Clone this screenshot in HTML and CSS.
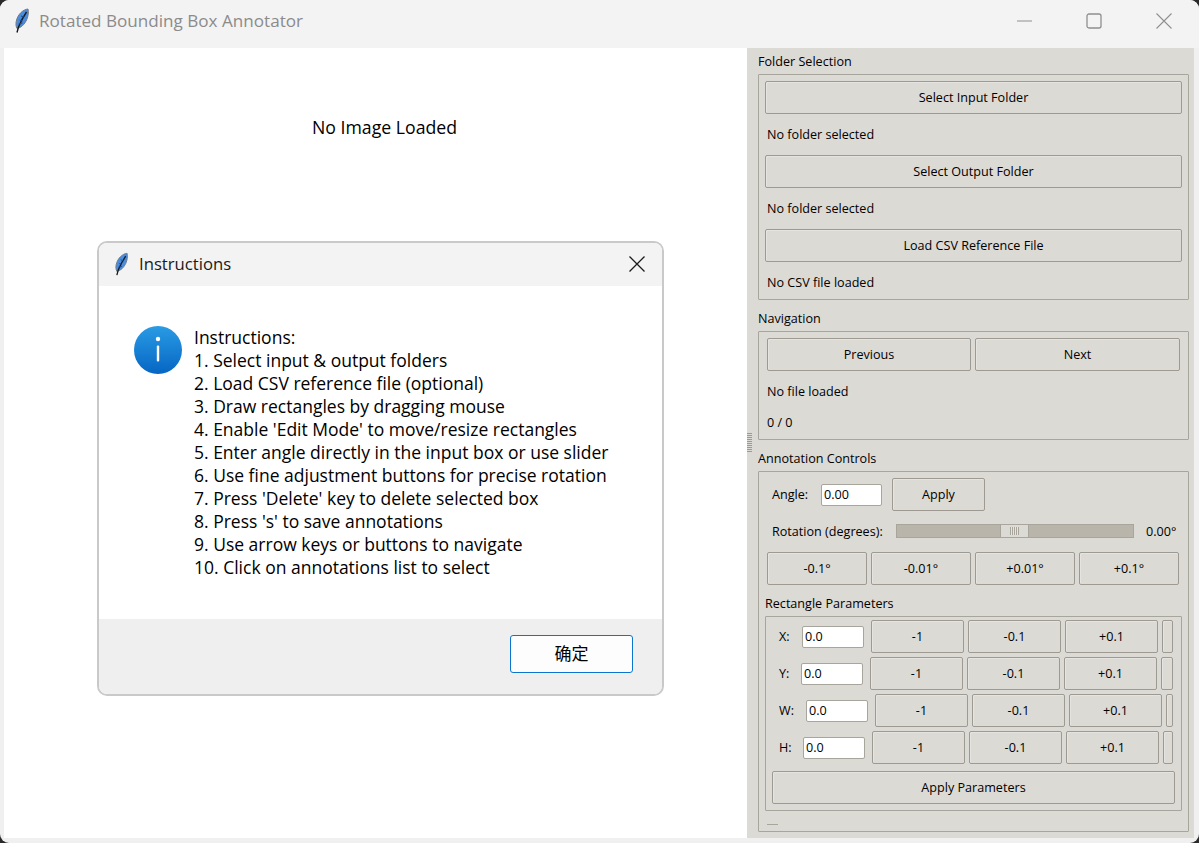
FILE: index.html
```html
<!DOCTYPE html>
<html lang="en">
<head>
  <meta charset="UTF-8">
  <meta name="viewport" content="width=device-width, initial-scale=1.0">
  <title>Rotated Bounding Box Annotator</title>
  <link rel="stylesheet" href="styles.css">
</head>
<body>
  <div class="window">
    <header class="titlebar">
      <svg class="feather" viewBox="0 0 14 25" width="14" height="25">
        <path d="M13 1C8 1.500 2.500 6.500 1.200 13.500c-.5 2.800-.2 5 .8 7 4-.8 7.500-4 9.700-8.800C13.200 8.500 13.800 4 13 1z" fill="#4a8ddd" stroke="#6f7a86" stroke-width="1"/>
        <path d="M11.500 4C8.500 8.500 5.500 14 3.500 19L2 24.500" fill="none" stroke="#141a22" stroke-width="1.400"/>
        <path d="M4.500 12l3 1M6 8l3 1M3.500 16l4-1" stroke="#1d4c8c" stroke-width="1"/>
      </svg>
      <span class="app-title">Rotated Bounding Box Annotator</span>
      <div class="window-buttons">
        <svg viewBox="0 0 16 16" width="16" height="16"><path d="M1 8h15" stroke="#8f8f8f" stroke-width="1"/></svg>
        <svg viewBox="0 0 16 16" width="16" height="16"><rect x="1" y="1" width="14" height="14" rx="2" fill="none" stroke="#8f8f8f" stroke-width="1.300"/></svg>
        <svg viewBox="0 0 16 16" width="16" height="16"><path d="M.5.5l15 15M15.500.5l-15 15" stroke="#8f8f8f" stroke-width="1.100"/></svg>
      </div>
    </header>

    <div class="content">
      <main class="canvas">
        <p class="no-image">No Image Loaded</p>
      </main>

      <aside class="panel">
        <div class="grip"></div>

        <h4>Folder Selection</h4>
        <section class="frame folders">
          <button>Select Input Folder</button>
          <p>No folder selected</p>
          <button>Select Output Folder</button>
          <p>No folder selected</p>
          <button>Load CSV Reference File</button>
          <p>No CSV file loaded</p>
        </section>

        <h4>Navigation</h4>
        <section class="frame navigation">
          <div class="nav-buttons">
            <button>Previous</button>
            <button>Next</button>
          </div>
          <p>No file loaded</p>
          <p>0 / 0</p>
        </section>

        <h4>Annotation Controls</h4>
        <section class="frame annotation">
          <div class="angle-row">
            <label>Angle:</label>
            <input type="text" value="0.00">
            <button>Apply</button>
          </div>
          <div class="rotation-row">
            <label>Rotation (degrees):</label>
            <div class="trough"><div class="thumb"><div class="thumb-lines"></div></div></div>
            <span>0.00°</span>
          </div>
          <div class="fine-row">
            <button>-0.1°</button>
            <button>-0.01°</button>
            <button>+0.01°</button>
            <button>+0.1°</button>
          </div>

          <h4 class="sub-title">Rectangle Parameters</h4>
          <div class="frame params">
            <div class="param-row row-x">
              <label>X:</label>
              <input type="text" value="0.0">
              <button>-1</button><button>-0.1</button><button>+0.1</button><button class="cut"></button>
            </div>
            <div class="param-row row-y">
              <label>Y:</label>
              <input type="text" value="0.0">
              <button>-1</button><button>-0.1</button><button>+0.1</button><button class="cut"></button>
            </div>
            <div class="param-row row-w">
              <label>W:</label>
              <input type="text" value="0.0">
              <button>-1</button><button>-0.1</button><button>+0.1</button><button class="cut"></button>
            </div>
            <div class="param-row row-h">
              <label>H:</label>
              <input type="text" value="0.0">
              <button>-1</button><button>-0.1</button><button>+0.1</button><button class="cut"></button>
            </div>
            <button class="apply-params">Apply Parameters</button>
          </div>
          <div class="dash"></div>
        </section>
      </aside>
    </div>

    <!-- message box on top of the main window -->
    <div class="dialog">
      <div class="dialog-title">
        <svg class="feather" viewBox="0 0 14 25" width="13" height="24">
          <path d="M13 1C8 1.500 2.500 6.500 1.200 13.500c-.5 2.800-.2 5 .8 7 4-.8 7.500-4 9.700-8.800C13.200 8.500 13.800 4 13 1z" fill="#4a8ddd" stroke="#6f7a86" stroke-width="1"/>
          <path d="M11.500 4C8.500 8.500 5.500 14 3.500 19L2 24.500" fill="none" stroke="#141a22" stroke-width="1.400"/>
          <path d="M4.500 12l3 1M6 8l3 1M3.500 16l4-1" stroke="#1d4c8c" stroke-width="1"/>
        </svg>
        <span>Instructions</span>
        <svg class="dialog-close" viewBox="0 0 16 16" width="16" height="16"><path d="M.5.5l15 15M15.500.5l-15 15" stroke="#1a1a1a" stroke-width="1.300"/></svg>
      </div>
      <div class="dialog-body">
        <svg class="info" viewBox="0 0 48 48" width="48" height="48">
          <defs>
            <linearGradient id="infoFill" x1="0" y1="0" x2="0" y2="1">
              <stop offset="0" stop-color="#2a9be4"/>
              <stop offset="1" stop-color="#0566c4"/>
            </linearGradient>
          </defs>
          <circle cx="24" cy="24" r="24" fill="url(#infoFill)"/>
          <circle cx="24" cy="13" r="2.200" fill="#fff"/>
          <rect x="22.800" y="19.500" width="2.400" height="16" rx="1" fill="#fff"/>
        </svg>
        <div class="dialog-text">
          <div>Instructions:</div>
          <div>1. Select input &amp; output folders</div>
          <div>2. Load CSV reference file (optional)</div>
          <div>3. Draw rectangles by dragging mouse</div>
          <div>4. Enable 'Edit Mode' to move/resize rectangles</div>
          <div>5. Enter angle directly in the input box or use slider</div>
          <div>6. Use fine adjustment buttons for precise rotation</div>
          <div>7. Press 'Delete' key to delete selected box</div>
          <div>8. Press 's' to save annotations</div>
          <div>9. Use arrow keys or buttons to navigate</div>
          <div>10. Click on annotations list to select</div>
        </div>
      </div>
      <div class="dialog-footer">
        <button class="ok">确定</button>
      </div>
    </div>
  </div>
</body>
</html>
```

FILE: styles.css
```css
* {
  box-sizing: border-box;
}

html, body {
  margin: 0;
  height: 100%;
}

body {
  background-color: #2a2a2a;
  overflow: hidden;
  font-family: "Open Sans", "Noto Sans CJK SC", sans-serif;
}

.window {
  position: relative;
  width: 1199px;
  height: 843px;
  background-color: #f0f0f0;
  border-radius: 9px;
  overflow: hidden;
  display: flex;
  flex-direction: column;
}

/* Title bar */
.titlebar {
  height: 48px;
  flex: none;
  background-color: #f3f3f3;
  display: flex;
  align-items: center;
  padding: 0 0 7px 15px;
}

.app-title {
  margin-left: 10px;
  font-size: 17.100px;
  color: #8b8b8b;
}

.window-buttons {
  margin-left: auto;
  margin-right: 27px;
  display: flex;
  gap: 54px;
}

/* Main area */
.content {
  flex: 1;
  display: flex;
  padding: 0 5px 5px 4px;
  min-height: 0;
}

.canvas {
  width: 743px;
  padding-left: 18px;
  background-color: #fff;
  text-align: center;
}

.no-image {
  margin: 67px 0 0;
  font-size: 17.700px;
  line-height: 24px;
  color: #000;
}

.panel {
  position: relative;
  flex: 1;
  background-color: #dcdad5;
  padding: 5px 5px 5px 11px;
  font-size: 12.600px;
  color: #000;
}

.grip {
  position: absolute;
  left: 0;
  top: 385px;
  width: 5px;
  height: 19px;
  background: repeating-linear-gradient(to bottom, #9e9a91 0 1px, #dcdad5 1px 2px);
}

.panel h4 {
  margin: 0;
  font-size: 12.600px;
  font-weight: normal;
  line-height: 18px;
  height: 21px;
}

.panel p {
  margin: 0;
  line-height: 16px;
}

.frame {
  border: 1px solid #a8a59d;
  border-radius: 1px;
}

button {
  display: block;
  font-family: inherit;
  font-size: 12.600px;
  color: #000;
  height: 33px;
  padding: 0;
  background-color: #dcdad5;
  border: 1px solid #9e9a91;
  border-radius: 2px;
  box-shadow: inset 1px 1px 0 #e6e4e0;
}

input {
  font-family: inherit;
  font-size: 12.600px;
  color: #000;
  width: 62px;
  height: 22px;
  padding: 0 1px 0 2px;
  background-color: #fff;
  border: 1px solid #a8a59d;
  border-radius: 2px;
  outline: none;
}

/* Folder selection */
.folders {
  height: 226px;
  margin-bottom: 10px;
  padding: 6px 6px 0;
}

.folders button {
  width: 100%;
}

.folders p {
  height: 41px;
  padding: 13px 2px 0;
}

/* Navigation */
.navigation {
  height: 109px;
  margin-bottom: 10px;
  padding: 6px 8px 0;
}

.nav-buttons {
  display: flex;
  gap: 4px;
}

.nav-buttons button {
  flex: 1;
}

.nav-buttons button:first-child {
  flex: none;
  width: 204px;
}

.navigation p {
  height: 31px;
  padding-top: 13px;
}

/* Annotation controls */
.annotation {
  height: 361px;
  padding: 6px 6px 0;
}

.angle-row {
  display: flex;
  align-items: center;
  height: 33px;
  padding-left: 7px;
}

.angle-row label {
  width: 49px;
}

.angle-row input {
  width: 61px;
}

.angle-row button {
  width: 93px;
  margin-left: 10px;
}

.rotation-row {
  display: flex;
  align-items: center;
  height: 14px;
  margin-top: 13px;
  padding-left: 7px;
}

.rotation-row label {
  width: 124px;
  white-space: nowrap;
}

.trough {
  width: 238px;
  height: 14px;
  background-color: #bab5ab;
  border: 1px solid #a8a59d;
}

.thumb {
  width: 29px;
  height: 12px;
  margin-left: 103px;
  padding: 2px 9px;
  background-color: #dcdad5;
  border-left: 1px solid #a8a59d;
  border-right: 1px solid #a8a59d;
}

.thumb-lines {
  height: 100%;
  background: repeating-linear-gradient(to right, #a8a59d 0 1px, #e6e4e0 1px 2px);
}

.rotation-row span {
  margin-left: 12px;
}

.fine-row {
  display: flex;
  gap: 4px;
  margin-top: 14px;
  padding-left: 2px;
}

.fine-row button {
  width: 100px;
}

.panel .sub-title {
  margin-top: 10px;
  height: 21px;
}

/* Rectangle parameters */
.params {
  height: 195px;
  margin-top: 0;
  padding: 3px 0 0;
}

.param-row {
  display: flex;
  align-items: center;
  gap: 4px;
  height: 33px;
  margin-bottom: 4px;
  padding-left: 13px;
  padding-right: 8px;
}

.param-row label {
  flex: none;
}

.param-row input {
  flex: none;
  margin-right: 3px;
}

.param-row button {
  width: 93px;
  flex: none;
}

.param-row .cut {
  flex: 1;
  width: auto;
  min-width: 0;
}

.row-x label { width: 19px; }
.row-y label { width: 18px; }
.row-w label { width: 23px; }
.row-h label { width: 20px; }

.apply-params {
  width: 403px;
  margin: 7px 0 0 6px;
}

.dash {
  width: 11px;
  height: 1px;
  margin: 13px 0 0 2px;
  background-color: #a8a59d;
}

/* Message box */
.dialog {
  position: absolute;
  left: 97px;
  top: 241px;
  width: 567px;
  height: 455px;
  background-color: #fff;
  border: 2px solid #c9c9c9;
  border-radius: 10px;
  overflow: hidden;
  display: flex;
  flex-direction: column;
}

.dialog-title {
  height: 43px;
  flex: none;
  background-color: #f3f3f3;
  display: flex;
  align-items: center;
  padding: 0 0 2px 16px;
  font-size: 16.700px;
  color: #1a1a1a;
}

.dialog-title span {
  margin-left: 11px;
}

.dialog-close {
  margin-left: auto;
  margin-right: 17px;
}

.dialog-body {
  flex: 1;
  display: flex;
  padding: 40px 0 0 35px;
}

.info {
  flex: none;
}

.dialog-text {
  margin: 0 0 0 12px;
  font-size: 17.500px;
  line-height: 23px;
  color: #000;
}

.dialog-footer {
  height: 75px;
  flex: none;
  background-color: #efefef;
  padding: 16px 0 0 411px;
}

.ok {
  width: 123px;
  height: 38px;
  padding-bottom: 4px;
  background-color: #fdfdfd;
  border: 1px solid #0a74d0;
  border-radius: 3px;
  box-shadow: none;
  font-size: 17px;
}
```
